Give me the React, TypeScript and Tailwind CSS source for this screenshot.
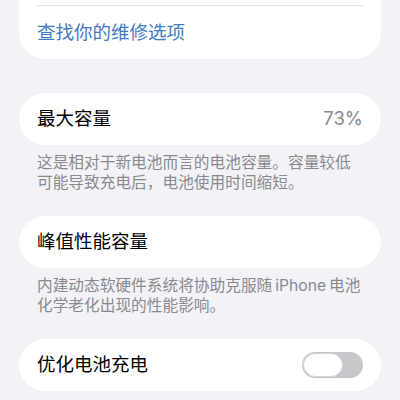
const font = { fontFamily: 'Inter, "Noto Sans CJK SC", sans-serif' };

function Card({ children }: { children: React.ReactNode }) {
  return (
    <div className="mx-[19px] h-[52px] rounded-[26px] bg-white px-[18px] flex items-center justify-between">
      {children}
    </div>
  );
}

function Footer({ children }: { children: React.ReactNode }) {
  return (
    <p className="px-[37px] pt-[8px] text-[15.7px] leading-[19.5px] text-[#8a8a8e] whitespace-nowrap">
      {children}
    </p>
  );
}

export default function App() {
  return (
    <div className="w-[400px] h-[400px] overflow-hidden bg-[#f2f2f7]" style={font}>
      {/* top card, mostly scrolled off */}
      <div className="-mt-[52px] mx-[19px] rounded-b-[26px] bg-white">
        <div className="h-[57px]" />
        <div className="mx-[18px] h-px bg-[#e0e0e5]" />
        <div className="h-[53px] px-[18px] flex items-center text-[18.5px] text-[#4279c6]">
          查找你的维修选项
        </div>
      </div>

      <div className="mt-[34px]">
        <Card>
          <span className="text-[18.5px] text-black">最大容量</span>
          <span className="text-[18.5px] text-[#8a8a8e]">73%</span>
        </Card>
        <Footer>
          这是相对于新电池而言的电池容量。容量较低
          <br />
          可能导致充电后，电池使用时间缩短。
        </Footer>
      </div>

      <div className="mt-[24px]">
        <Card>
          <span className="text-[18.5px] text-black">峰值性能容量</span>
        </Card>
        <Footer>
          内建动态软硬件系统将协助克服随{'\u2009'}iPhone{'\u2009'}电池
          <br />
          化学老化出现的性能影响。
        </Footer>
      </div>

      <div className="mt-[24px]">
        <Card>
          <span className="text-[18.5px] text-black">优化电池充电</span>
          <div className="w-[61px] h-[26px] rounded-full bg-[#c8c8cc] p-[1px] flex items-center">
            <div className="w-[40px] h-[24px] rounded-full bg-white border border-[#d4d4d8]" />
          </div>
        </Card>
      </div>
    </div>
  );
}
